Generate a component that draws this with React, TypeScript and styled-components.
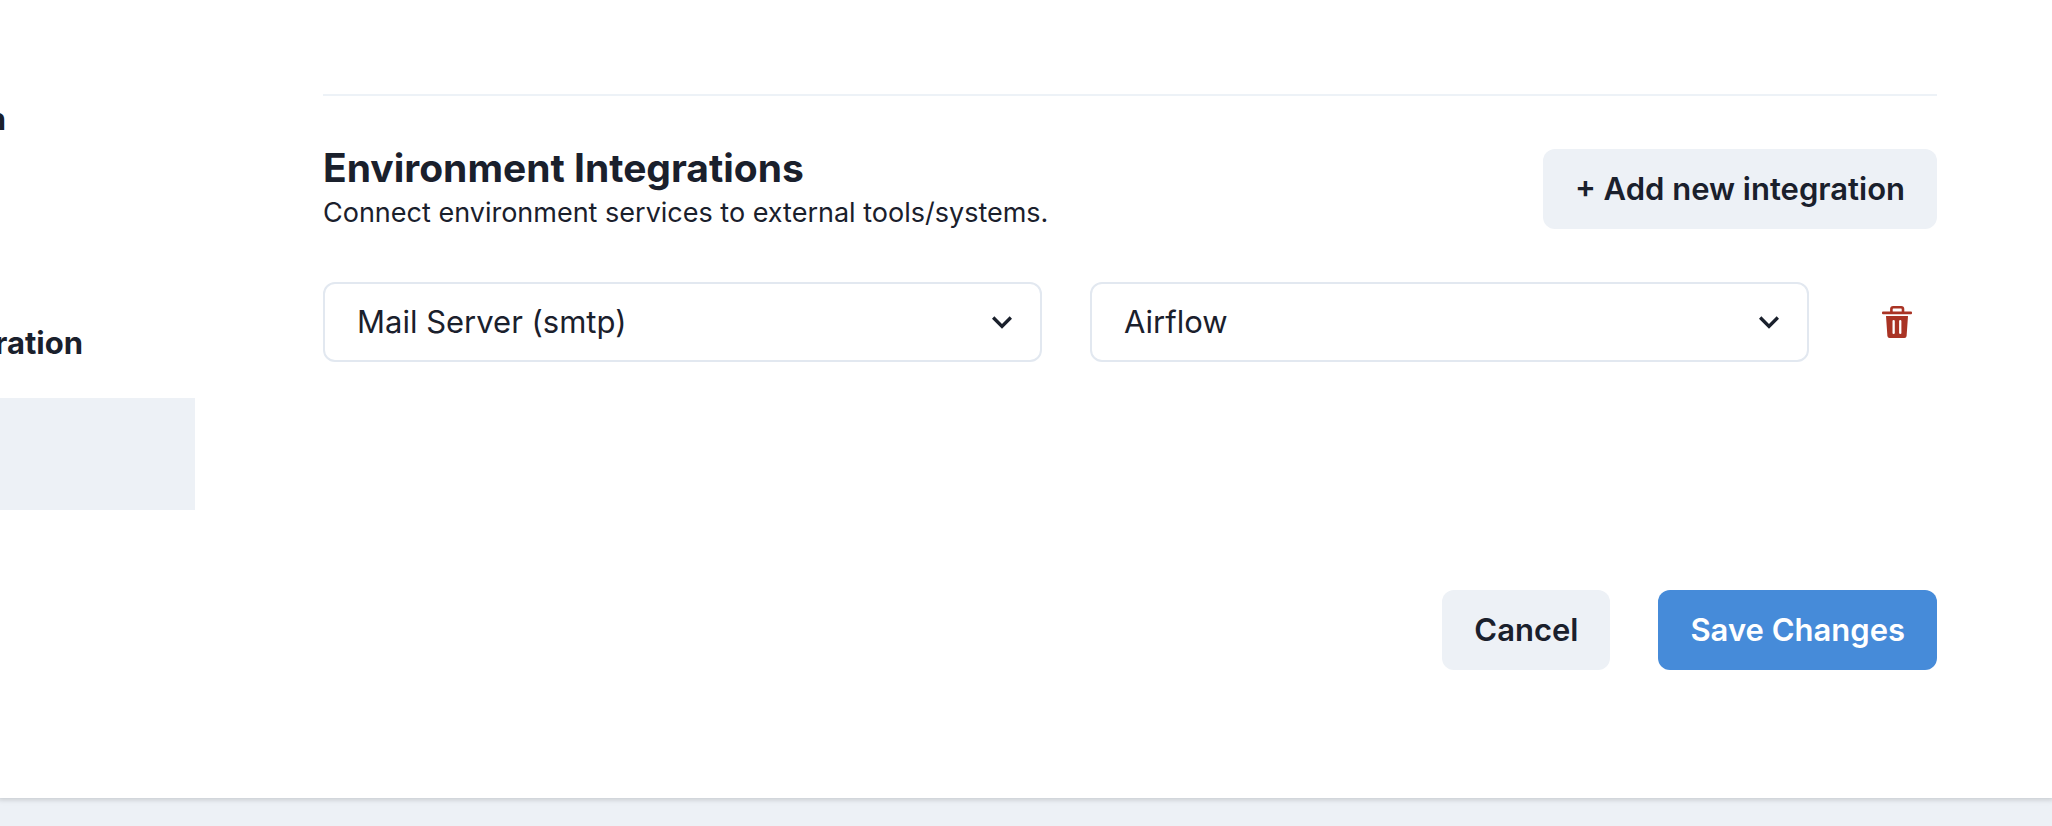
import React from "react";
import styled, { createGlobalStyle, css } from "styled-components";

const GlobalStyle = createGlobalStyle`
  *, *::before, *::after { box-sizing: border-box; }
  body {
    margin: 0;
    background: #edf1f6;
    color: #1a202c;
    font-family: Inter, "Liberation Sans", sans-serif;
    font-size: 31px;
    line-height: 48px;
  }
`;

const Page = styled.div`
  min-height: 100vh;
  background: #edf1f6;
`;

const Card = styled.main`
  display: grid;
  grid-template-columns: 195px minmax(0, 1fr);
  column-gap: 128px;
  padding-right: 115px;
  background: #fff;
  box-shadow: 0 0 6px 2px rgba(0, 0, 0, 0.1), 0 0 4px 2px rgba(0, 0, 0, 0.06);
`;

const Steps = styled.nav`
  display: flex;
  flex-direction: column;
  gap: 176px;
  padding-top: 95px;
  overflow: hidden;
`;

const Step = styled.a<{ $end: number }>`
  display: flex;
  justify-content: flex-end;
  width: ${(p) => p.$end}px;
  color: inherit;
  font-weight: 700;
  text-decoration: none;
`;

const StepGroup = styled.div`
  display: grid;
  gap: 31px;
`;

const ActiveStep = styled.div`
  height: 112px;
  background: #edf1f6;
`;

const Panel = styled.form`
  padding: 94px 0 128px;
`;

const Header = styled.header`
  display: flex;
  align-items: center;
  justify-content: space-between;
  padding: 48px 0;
  border-top: 2px solid #edf2f7;
`;

const Title = styled.h2`
  margin: 0;
  font-size: 39px;
  line-height: 48px;
  font-weight: 700;
`;

const Description = styled.p`
  margin: 0;
  font-size: 27px;
  line-height: 42px;
`;

const Button = styled.button<{ $primary?: boolean }>`
  height: 80px;
  padding: 0 32px;
  border: 0;
  border-radius: 12px;
  background: #edf1f6;
  color: inherit;
  font: inherit;
  font-weight: 600;
  white-space: nowrap;
  cursor: pointer;
  ${(p) =>
    p.$primary &&
    css`
      background: #468bd9;
      color: #fff;
    `}
`;

const IntegrationRow = styled.div`
  display: grid;
  grid-template-columns: 1fr 1fr 80px;
  column-gap: 48px;
`;

const SelectBox = styled.div`
  display: grid;
  align-items: center;

  & > * {
    grid-area: 1 / 1;
  }
`;

const Select = styled.select`
  width: 100%;
  height: 80px;
  padding: 0 64px 0 32px;
  border: 2px solid #e2e8f0;
  border-radius: 12px;
  appearance: none;
  background: #fff;
  color: inherit;
  font: inherit;
`;

const Chevron = styled.svg`
  justify-self: end;
  width: 40px;
  height: 40px;
  margin-right: 20px;
  pointer-events: none;
`;

const DeleteButton = styled.button`
  display: flex;
  align-items: center;
  justify-content: center;
  height: 80px;
  padding: 0;
  border: 0;
  border-radius: 12px;
  background: transparent;
  color: #a93324;
  cursor: pointer;
`;

const Actions = styled.footer`
  display: flex;
  justify-content: flex-end;
  gap: 48px;
  margin-top: 228px;
`;

function Dropdown({ label, value }: { label: string; value: string }) {
  return (
    <SelectBox>
      <Select aria-label={label} defaultValue={value}>
        <option value={value}>{value}</option>
      </Select>
      <Chevron viewBox="0 0 24 24" aria-hidden="true">
        <path fill="currentColor" d="M16.59 8.59L12 13.17 7.41 8.59 6 10l6 6 6-6z" />
      </Chevron>
    </SelectBox>
  );
}

function TrashIcon() {
  return (
    <svg width="32" height="32" viewBox="0 0 32 32" aria-hidden="true">
      <path
        d="M10.4 6.5V2.9Q10.4 1.3 12.2 1.3H20.2Q22 1.3 22 2.9V6.5"
        fill="none"
        stroke="currentColor"
        strokeWidth="2.6"
      />
      <rect x="1" y="5.4" width="30" height="2.8" rx="1" fill="currentColor" />
      <path
        fillRule="evenodd"
        fill="currentColor"
        d="M5 10H27L25.6 30Q25.4 32 23.4 32H8.6Q6.6 32 6.4 30ZM12.6 14Q11.5 14 11.5 15.1V26.9Q11.5 28 12.6 28Q13.8 28 13.8 26.9V15.1Q13.8 14 12.6 14ZM19.3 14Q18.1 14 18.1 15.1V26.9Q18.1 28 19.3 28Q20.4 28 20.4 26.9V15.1Q20.4 14 19.3 14Z"
      />
    </svg>
  );
}

export default function App() {
  return (
    <Page>
      <GlobalStyle />
      <Card>
        <Steps>
          <Step href="#" $end={6}>n</Step>
          <StepGroup>
            <Step href="#" $end={83}>ration</Step>
            <ActiveStep />
          </StepGroup>
        </Steps>
        <Panel onSubmit={(e) => e.preventDefault()}>
          <Header>
            <div>
              <Title>Environment Integrations</Title>
              <Description>Connect environment services to external tools/systems.</Description>
            </div>
            <Button type="button">+ Add new integration</Button>
          </Header>
          <IntegrationRow>
            <Dropdown label="Service" value="Mail Server (smtp)" />
            <Dropdown label="Target" value="Airflow" />
            <DeleteButton type="button" aria-label="Delete integration">
              <TrashIcon />
            </DeleteButton>
          </IntegrationRow>
          <Actions>
            <Button type="button">Cancel</Button>
            <Button type="submit" $primary>Save Changes</Button>
          </Actions>
        </Panel>
      </Card>
    </Page>
  );
}
